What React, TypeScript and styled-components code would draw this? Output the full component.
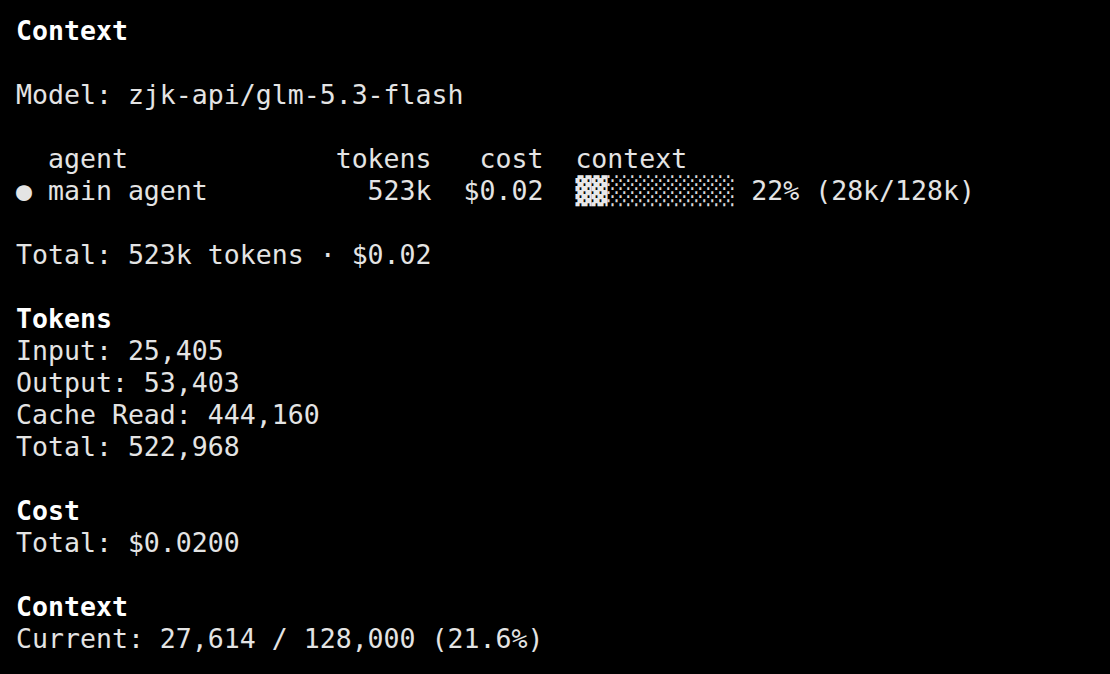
import React from "react";
import styled, { createGlobalStyle } from "styled-components";

const Global = createGlobalStyle`
  html, body {
    margin: 0;
    padding: 0;
    background: #000000;
  }
  body {
    width: 1110px;
    height: 674px;
    overflow: hidden;
  }
`;

const Terminal = styled.div`
  box-sizing: border-box;
  width: 1110px;
  height: 674px;
  background: #000000;
  padding: 15px 16px 0 16px;
  font-family: "DejaVu Sans Mono", "Liberation Mono", monospace;
  font-size: 26.55px;
  line-height: 32px;
  color: #e4e4e4;
  display: flex;
  flex-direction: column;
`;

const Line = styled.div`
  height: 32px;
  white-space: pre;
`;

const Heading = styled(Line)`
  font-weight: bold;
  color: #ffffff;
`;

const Blank = styled.div`
  height: 32px;
`;

const Bullet = styled.span`
  color: #e4e4e4;
`;

const BarFilled = styled.span`
  color: #e8e8e8;
`;

const BarEmpty = styled.span`
  color: #d8d8d8;
`;

const Section = styled.section`
  display: flex;
  flex-direction: column;
`;

function ContextBar({ percent, width }: { percent: number; width: number }) {
  const filled = Math.floor((percent / 100) * width);
  return (
    <>
      <BarFilled>{"▓".repeat(filled)}</BarFilled>
      <BarEmpty>{"░".repeat(width - filled)}</BarEmpty>
    </>
  );
}

export default function App() {
  return (
    <>
      <Global />
      <Terminal>
        <Heading>Context</Heading>
        <Blank />
        <Line>Model: zjk-api/glm-5.3-flash</Line>
        <Blank />
        <Line>{"  agent             tokens   cost  context"}</Line>
        <Line>
          <Bullet>●</Bullet>
          {" main agent          523k  $0.02  "}
          <ContextBar percent={22} width={10} />
          {" 22% (28k/128k)"}
        </Line>
        <Blank />
        <Line>Total: 523k tokens · $0.02</Line>
        <Blank />
        <Section>
          <Heading>Tokens</Heading>
          <Line>Input: 25,405</Line>
          <Line>Output: 53,403</Line>
          <Line>Cache Read: 444,160</Line>
          <Line>Total: 522,968</Line>
        </Section>
        <Blank />
        <Section>
          <Heading>Cost</Heading>
          <Line>Total: $0.0200</Line>
        </Section>
        <Blank />
        <Section>
          <Heading>Context</Heading>
          <Line>Current: 27,614 / 128,000 (21.6%)</Line>
        </Section>
      </Terminal>
    </>
  );
}
